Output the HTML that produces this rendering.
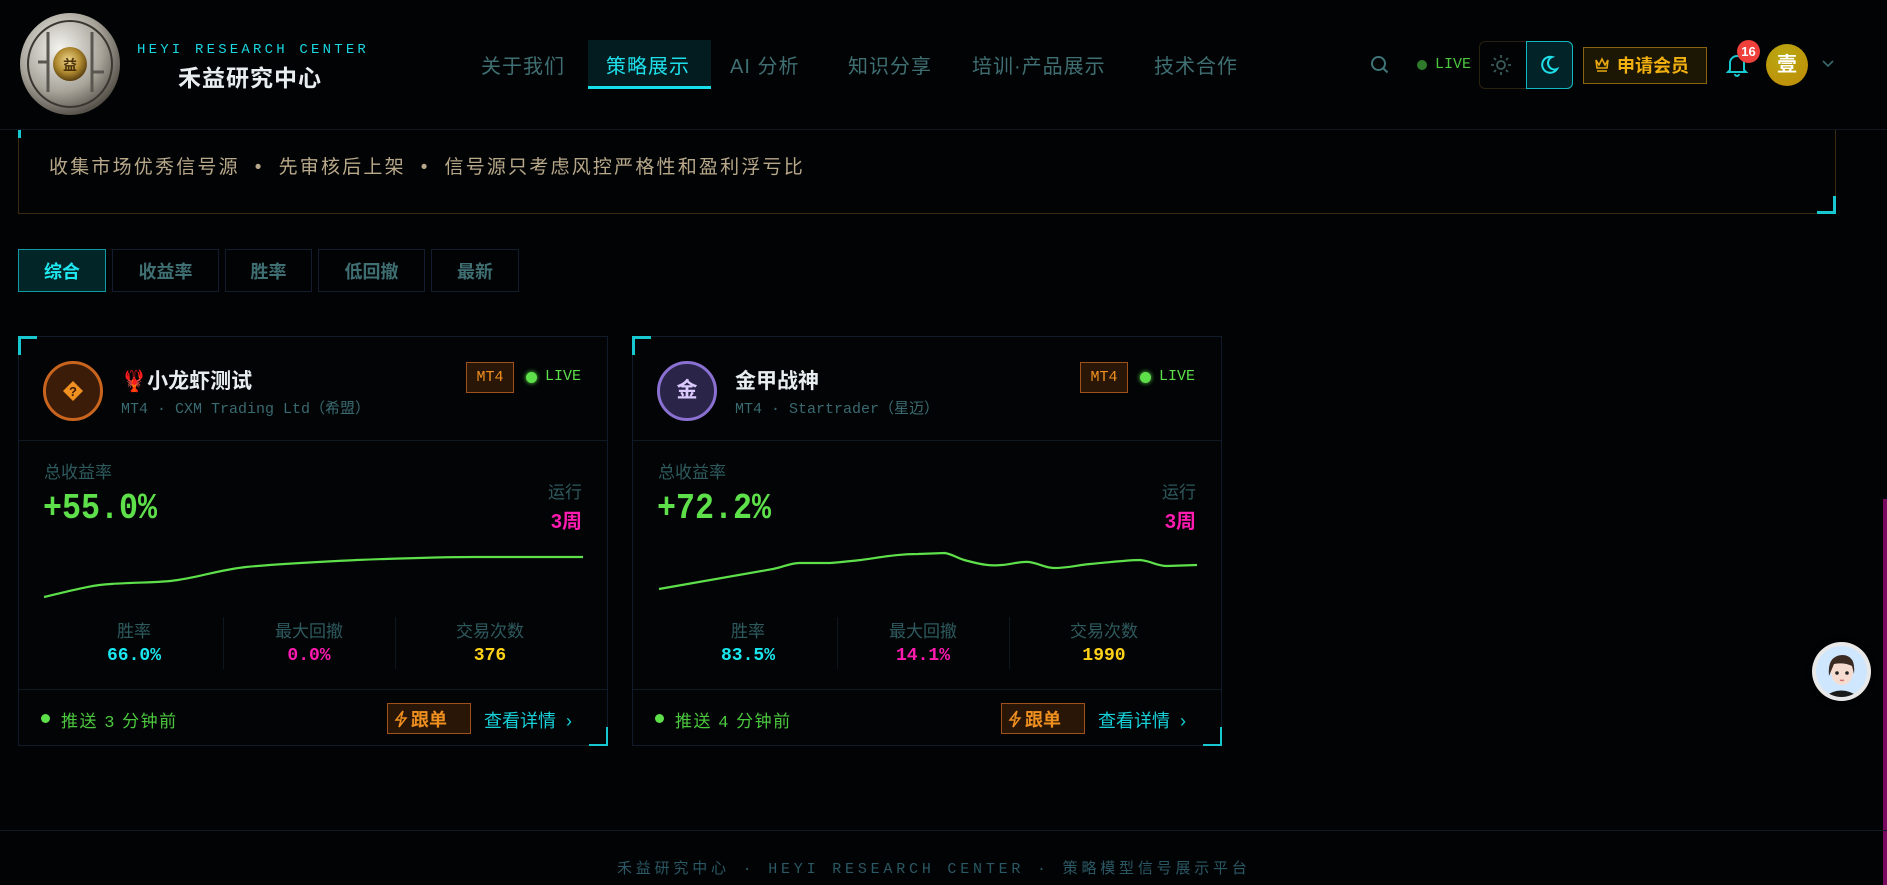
<!DOCTYPE html>
<html><head><meta charset="utf-8">
<style>
*{margin:0;padding:0;box-sizing:border-box}
body{width:1887px;height:885px;background:#020305;overflow:hidden;position:relative;font-family:"Liberation Sans","Noto Sans CJK SC",sans-serif;color:#ccc}
.a{position:absolute;white-space:nowrap}
.mono{font-family:"Liberation Mono","Noto Sans CJK SC",monospace}
.nav{top:50px;font-size:20px;color:#3f6f72;letter-spacing:1px}
.card{position:absolute;top:336px;width:590px;height:410px;border:1px solid #111c2a;background:#020406}
.card .c{position:absolute;white-space:nowrap}
.big{transform:scaleX(.88);transform-origin:left top}
.tab{position:absolute;top:249px;height:43px;border:1px solid #141c30;color:#3f6f72;font-weight:bold;font-size:18px;display:flex;align-items:center;justify-content:center}
</style></head><body>

<!-- header -->
<div class="a" style="left:0;top:129px;width:1887px;height:1px;background:#121620"></div>
<svg class="a" style="left:18px;top:12px" width="104" height="104" viewBox="0 0 104 104">
<defs><radialGradient id="sv" cx="40%" cy="35%" r="70%"><stop offset="0" stop-color="#f4f4f0"/><stop offset=".6" stop-color="#a8a49a"/><stop offset="1" stop-color="#4a463e"/></radialGradient>
<radialGradient id="gd" cx="45%" cy="40%" r="60%"><stop offset="0" stop-color="#f0d890"/><stop offset=".6" stop-color="#b08a30"/><stop offset="1" stop-color="#5a4010"/></radialGradient></defs>
<ellipse cx="52" cy="52" rx="50" ry="51" fill="url(#sv)"/>
<ellipse cx="52" cy="52" rx="42" ry="43" fill="none" stroke="#3a3630" stroke-width="2"/>
<path d="M30 20 V80 M74 20 V80 M30 50 H20 M74 60 H86" stroke="#5a5650" stroke-width="3" fill="none"/>
<circle cx="52" cy="52" r="17" fill="url(#gd)"/>
<text x="52" y="58" font-size="14" text-anchor="middle" fill="#4a3008" font-weight="bold" font-family="Noto Sans CJK SC">益</text>
</svg>
<div class="a mono" style="left:137px;top:42px;font-size:14px;color:#19d6e0;letter-spacing:3.2px">HEYI RESEARCH CENTER</div>
<div class="a" style="left:178px;top:59px;font-size:23px;font-weight:bold;color:#e8eef0;letter-spacing:1px">禾益研究中心</div>

<div class="a nav" style="left:481px">关于我们</div>
<div class="a" style="left:588px;top:40px;width:123px;height:49px;background:#021c20;border-bottom:3px solid #17e0ea"></div>
<div class="a nav" style="left:606px;color:#1fe0ea">策略展示</div>
<div class="a nav" style="left:730px">AI 分析</div>
<div class="a nav" style="left:848px">知识分享</div>
<div class="a nav" style="left:972px">培训·产品展示</div>
<div class="a nav" style="left:1154px">技术合作</div>

<svg class="a" style="left:1370px;top:55px" width="20" height="20" viewBox="0 0 20 20"><circle cx="8.5" cy="8.5" r="6.5" fill="none" stroke="#3f7478" stroke-width="2"/><path d="M13.5 13.5 L17.5 17.5" stroke="#3f7478" stroke-width="2"/></svg>
<div class="a" style="left:1417px;top:60px;width:10px;height:10px;border-radius:50%;background:#2e7a2a"></div>
<div class="a mono" style="left:1435px;top:56px;font-size:15px;color:#4cc83e">LIVE</div>
<div class="a" style="left:1479px;top:41px;width:94px;height:48px;border:1px solid #2a2210;border-radius:6px"></div>
<div class="a" style="left:1526px;top:41px;width:47px;height:48px;border:1px solid #12b8c0;border-radius:0 6px 6px 0;background:#022428"></div>
<svg class="a" style="left:1490px;top:54px" width="22" height="22" viewBox="0 0 22 22"><circle cx="11" cy="11" r="4" fill="none" stroke="#3a5a5c" stroke-width="1.8"/><g stroke="#3a5a5c" stroke-width="1.8"><path d="M11 1v3M11 18v3M1 11h3M18 11h3M4 4l2 2M16 16l2 2M4 18l2-2M16 6l2-2"/></g></svg>
<svg class="a" style="left:1538px;top:54px" width="22" height="22" viewBox="0 0 22 22"><path d="M14 3 A8 8 0 1 0 19 15 A6.5 6.5 0 0 1 14 3 Z" fill="none" stroke="#1fe0ea" stroke-width="2"/></svg>
<div class="a" style="left:1583px;top:47px;width:124px;height:37px;border:1px solid #8a6410;background:#1c1604"></div>
<svg class="a" style="left:1594px;top:56px" width="16" height="18" viewBox="0 0 16 18"><path d="M2 4 L5 9 L8 3 L11 9 L14 4 L13 12 H3 Z M3 15 H13" fill="none" stroke="#e8a810" stroke-width="1.6"/></svg>
<div class="a" style="left:1617px;top:52px;font-size:18px;font-weight:bold;color:#f0b010">申请会员</div>
<svg class="a" style="left:1726px;top:52px" width="22" height="26" viewBox="0 0 22 26"><path d="M4 18 V11 A7 7 0 0 1 18 11 V18 L20 20 H2 Z M9 22 A2 2 0 0 0 13 22" fill="none" stroke="#17c8d0" stroke-width="2"/></svg>
<div class="a" style="left:1737px;top:40px;width:23px;height:23px;border-radius:50%;background:#f0403c;color:#fff;font-size:13px;font-weight:bold;text-align:center;line-height:23px">16</div>
<div class="a" style="left:1766px;top:44px;width:42px;height:42px;border-radius:50%;background:radial-gradient(circle at 40% 30%,#b8a810,#c08a08);color:#fff;font-weight:bold;font-size:20px;text-align:center;line-height:42px">壹</div>
<svg class="a" style="left:1822px;top:60px" width="12" height="8" viewBox="0 0 12 8"><path d="M1 1 L6 6 L11 1" fill="none" stroke="#3a6a6e" stroke-width="1.6"/></svg>

<!-- banner -->
<div class="a" style="left:18px;top:130px;width:1818px;height:84px;border:1px solid #3a2a10;border-top:none"></div>
<div class="a" style="left:18px;top:130px;width:3px;height:8px;background:#17c8d0"></div>
<div class="a" style="left:1817px;top:196px;width:19px;height:18px;border-right:3px solid #17c8d0;border-bottom:3px solid #17c8d0"></div>
<div class="a" style="left:49px;top:152px;font-size:19px;color:#b8a88a;letter-spacing:2.2px">收集市场优秀信号源 &nbsp;•&nbsp; 先审核后上架 &nbsp;•&nbsp; 信号源只考虑风控严格性和盈利浮亏比</div>

<!-- tabs -->
<div class="tab" style="left:18px;width:88px;border-color:#0e9aa2;background:#022628;color:#1fe8f0">综合</div>
<div class="tab" style="left:112px;width:107px">收益率</div>
<div class="tab" style="left:225px;width:87px">胜率</div>
<div class="tab" style="left:318px;width:107px">低回撤</div>
<div class="tab" style="left:431px;width:88px">最新</div>

<!-- card 1 -->
<div class="card" style="left:18px">
 <div class="c" style="left:-1px;top:-1px;width:19px;height:19px;border-left:3px solid #17c8d0;border-top:3px solid #17c8d0"></div>
 <div class="c" style="right:-1px;bottom:-1px;width:19px;height:19px;border-right:2px solid #17c8d0;border-bottom:2px solid #17c8d0"></div>
 <div class="c" style="left:24px;top:24px;width:60px;height:60px;border-radius:50%;background:#3a1c08;border:3px solid #c8641e"></div>
 <svg class="c" style="left:43px;top:43px" width="22" height="22" viewBox="0 0 22 22"><path d="M11 1 L21 11 L11 21 L1 11 Z" fill="#f09020"/><text x="11" y="16" font-size="13" font-weight="bold" text-anchor="middle" fill="#3a1c08" font-family="Liberation Sans">?</text></svg>
 <div class="c" style="left:102px;top:28px;font-size:21px;font-weight:bold;color:#e8eef0"><span style="color:#e0202a">🦞</span>小龙虾测试</div>
 <div class="c mono" style="left:102px;top:60px;font-size:15px;color:#3a6a70">MT4 · CXM Trading Ltd（希盟）</div>
 <div class="c mono" style="left:447px;top:25px;width:48px;height:31px;border:1px solid #a0501a;background:#2a1606;color:#f09020;font-size:15px;text-align:center;line-height:29px">MT4</div>
 <div class="c" style="left:507px;top:35px;width:11px;height:11px;border-radius:50%;background:#5ee04a;box-shadow:0 0 5px #5ee04a"></div>
 <div class="c mono" style="left:526px;top:31px;font-size:15px;color:#5ee04a">LIVE</div>
 <div class="c" style="left:0;top:103px;width:588px;height:1px;background:#101824"></div>
 <div class="c" style="left:25px;top:121px;font-size:17px;color:#2e5a5e">总收益率</div>
 <div class="c mono big" style="left:24px;top:151px;font-size:36px;font-weight:bold;color:#5ee04a">+55.0%</div>
 <div class="c" style="right:25px;top:141px;font-size:17px;color:#2e5a5e">运行</div>
 <div class="c" style="right:25px;top:168px;font-size:20px;font-weight:bold;color:#ff1ab0">3周</div>
 <svg class="c" style="left:0;top:0" width="590" height="300"><path d="M25 260 C55 253 72 248 92 247 C120 245 140 246 159 243 C185 239 200 233 227 230 C270 226 300 225 338 223 C390 221 420 220 457 220 L564 220" fill="none" stroke="#5ee04a" stroke-width="2.2"/></svg>
 <div class="c" style="left:204px;top:280px;width:1px;height:52px;background:#0e1620"></div>
 <div class="c" style="left:376px;top:280px;width:1px;height:52px;background:#0e1620"></div>
 <div class="c" style="left:25px;top:280px;width:180px;text-align:center;font-size:17px;color:#2e5a5e">胜率</div>
 <div class="c" style="left:204px;top:280px;width:172px;text-align:center;font-size:17px;color:#2e5a5e">最大回撤</div>
 <div class="c" style="left:376px;top:280px;width:190px;text-align:center;font-size:17px;color:#2e5a5e">交易次数</div>
 <div class="c mono" style="left:25px;top:309px;width:180px;text-align:center;font-size:18px;font-weight:bold;color:#1ae8f0">66.0%</div>
 <div class="c mono" style="left:204px;top:309px;width:172px;text-align:center;font-size:18px;font-weight:bold;color:#ff1ab0">0.0%</div>
 <div class="c mono" style="left:376px;top:309px;width:190px;text-align:center;font-size:18px;font-weight:bold;color:#ffd21a">376</div>
 <div class="c" style="left:0;top:352px;width:588px;height:1px;background:#101824"></div>
 <div class="c" style="left:22px;top:377px;width:9px;height:9px;border-radius:50%;background:#5ee04a"></div>
 <div class="c" style="left:42px;top:370px;font-size:17px;color:#4cc83e;letter-spacing:1.5px">推送 <span class="mono">3</span> 分钟前</div>
 <div class="c" style="left:368px;top:366px;width:84px;height:31px;border:1px solid #a0501a;background:#2a1606"></div>
 <svg class="c" style="left:375px;top:373px" width="14" height="18" viewBox="0 0 14 18"><path d="M9 1 L2 10 H7 L5 17 L12 8 H7 Z" fill="none" stroke="#f09020" stroke-width="1.5"/></svg>
 <div class="c" style="left:392px;top:369px;font-size:18px;font-weight:bold;color:#f09020">跟单</div>
 <div class="c" style="left:465px;top:370px;font-size:18px;color:#17d0d8">查看详情 &nbsp;›</div>
</div>

<!-- card 2 -->
<div class="card" style="left:632px">
 <div class="c" style="left:-1px;top:-1px;width:19px;height:19px;border-left:3px solid #17c8d0;border-top:3px solid #17c8d0"></div>
 <div class="c" style="right:-1px;bottom:-1px;width:19px;height:19px;border-right:2px solid #17c8d0;border-bottom:2px solid #17c8d0"></div>
 <div class="c" style="left:24px;top:24px;width:60px;height:60px;border-radius:50%;background:#2a2448;border:3px solid #8a70d0;color:#dccaff;font-weight:bold;font-size:21px;text-align:center;line-height:54px">金</div>
 <div class="c" style="left:102px;top:28px;font-size:21px;font-weight:bold;color:#e8eef0">金甲战神</div>
 <div class="c mono" style="left:102px;top:60px;font-size:15px;color:#3a6a70">MT4 · Startrader（星迈）</div>
 <div class="c mono" style="left:447px;top:25px;width:48px;height:31px;border:1px solid #a0501a;background:#2a1606;color:#f09020;font-size:15px;text-align:center;line-height:29px">MT4</div>
 <div class="c" style="left:507px;top:35px;width:11px;height:11px;border-radius:50%;background:#5ee04a;box-shadow:0 0 5px #5ee04a"></div>
 <div class="c mono" style="left:526px;top:31px;font-size:15px;color:#5ee04a">LIVE</div>
 <div class="c" style="left:0;top:103px;width:588px;height:1px;background:#101824"></div>
 <div class="c" style="left:25px;top:121px;font-size:17px;color:#2e5a5e">总收益率</div>
 <div class="c mono big" style="left:24px;top:151px;font-size:36px;font-weight:bold;color:#5ee04a">+72.2%</div>
 <div class="c" style="right:25px;top:141px;font-size:17px;color:#2e5a5e">运行</div>
 <div class="c" style="right:25px;top:168px;font-size:20px;font-weight:bold;color:#ff1ab0">3周</div>
 <svg class="c" style="left:0;top:0" width="590" height="300"><path d="M26 252 L140 232 C150 230 158 226 166 226 L197 226 C210 225 218 224 228 223 C250 220 265 217 285 217 L312 216 C322 218 325 222 335 224 C350 228 358 229 369 228 C380 227 388 224 396 225 C405 226 412 231 421 231 C435 231 445 228 457 227 C480 225 495 223 507 223 C518 224 524 229 534 229 L564 228" fill="none" stroke="#5ee04a" stroke-width="2.2"/></svg>
 <div class="c" style="left:204px;top:280px;width:1px;height:52px;background:#0e1620"></div>
 <div class="c" style="left:376px;top:280px;width:1px;height:52px;background:#0e1620"></div>
 <div class="c" style="left:25px;top:280px;width:180px;text-align:center;font-size:17px;color:#2e5a5e">胜率</div>
 <div class="c" style="left:204px;top:280px;width:172px;text-align:center;font-size:17px;color:#2e5a5e">最大回撤</div>
 <div class="c" style="left:376px;top:280px;width:190px;text-align:center;font-size:17px;color:#2e5a5e">交易次数</div>
 <div class="c mono" style="left:25px;top:309px;width:180px;text-align:center;font-size:18px;font-weight:bold;color:#1ae8f0">83.5%</div>
 <div class="c mono" style="left:204px;top:309px;width:172px;text-align:center;font-size:18px;font-weight:bold;color:#ff1ab0">14.1%</div>
 <div class="c mono" style="left:376px;top:309px;width:190px;text-align:center;font-size:18px;font-weight:bold;color:#ffd21a">1990</div>
 <div class="c" style="left:0;top:352px;width:588px;height:1px;background:#101824"></div>
 <div class="c" style="left:22px;top:377px;width:9px;height:9px;border-radius:50%;background:#5ee04a"></div>
 <div class="c" style="left:42px;top:370px;font-size:17px;color:#4cc83e;letter-spacing:1.5px">推送 <span class="mono">4</span> 分钟前</div>
 <div class="c" style="left:368px;top:366px;width:84px;height:31px;border:1px solid #a0501a;background:#2a1606"></div>
 <svg class="c" style="left:375px;top:373px" width="14" height="18" viewBox="0 0 14 18"><path d="M9 1 L2 10 H7 L5 17 L12 8 H7 Z" fill="none" stroke="#f09020" stroke-width="1.5"/></svg>
 <div class="c" style="left:392px;top:369px;font-size:18px;font-weight:bold;color:#f09020">跟单</div>
 <div class="c" style="left:465px;top:370px;font-size:18px;color:#17d0d8">查看详情 &nbsp;›</div>
</div>

<!-- right edge -->
<div class="a" style="left:1883px;top:499px;width:4px;height:386px;background:#7a0a60"></div>
<div class="a" style="left:1812px;top:642px;width:59px;height:59px;border-radius:50%;background:#e8e8e8;box-shadow:0 0 6px #000"></div>
<svg class="a" style="left:1816px;top:646px" width="51" height="51" viewBox="0 0 51 51"><clipPath id="cc"><circle cx="25.5" cy="25.5" r="25.5"/></clipPath><g clip-path="url(#cc)"><rect width="51" height="51" fill="#cfe6ff"/><path d="M8 51 Q25 38 43 51 Z" fill="#1a1a1a"/><ellipse cx="26" cy="26" rx="11" ry="13" fill="#f6dcd0"/><path d="M13 30 Q11 10 26 9 Q40 9 38 28 L36 20 Q28 16 18 18 Z" fill="#3a2a22"/><circle cx="21" cy="27" r="1.8" fill="#222"/><circle cx="31" cy="27" r="1.8" fill="#222"/><path d="M24 34 Q26 35 28 34" stroke="#d07070" stroke-width="1.5" fill="none"/></g></svg>

<!-- footer -->
<div class="a" style="left:0;top:830px;width:1887px;height:1px;background:#121a28"></div>
<div class="a mono" style="left:617px;top:857px;font-size:15px;color:#2a5864;letter-spacing:3.8px">禾益研究中心 · HEYI RESEARCH CENTER · 策略模型信号展示平台</div>
</body></html>
